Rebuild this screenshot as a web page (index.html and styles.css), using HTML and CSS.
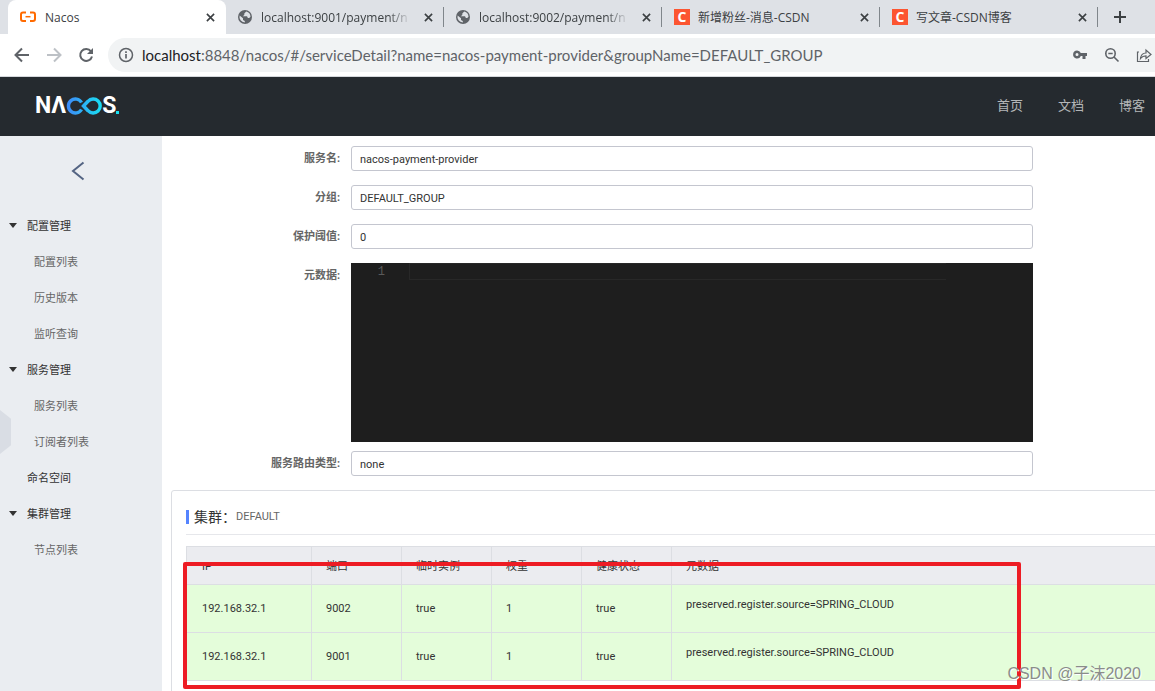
FILE: index.html
```html
<!DOCTYPE html>
<html lang="zh-CN">
<head>
<meta charset="utf-8">
<title>Nacos</title>
<link rel="stylesheet" href="styles.css">
</head>
<body>
<svg class="defs" aria-hidden="true">
  <symbol id="i-close" viewBox="0 0 10 10"><path d="M1 1l8 8M9 1L1 9" fill="none" stroke="#3c4043" stroke-width="1.8"/></symbol>
  <symbol id="i-globe" viewBox="0 0 14 14"><circle cx="7" cy="7" r="7" fill="#5f6368"/><path d="M1.6 5.6L5 8.300v1.800l1.800 1v1.400A5.600 5.600 0 0 1 1.600 5.600zM8.200 1.500L6.300 3.600v1.300L4.800 6.200h4.200l.900 1.700h1.300l1.300-1.200A5.600 5.600 0 0 0 8.200 1.500z" fill="#dee1e6"/></symbol>
</svg>

<div class="browser">
  <div class="tabs">
    <div class="tab tab-active">
      <svg class="favicon" viewBox="0 0 16 16"><path d="M6 3.500H3Q1 3.500 1 5.500v4.500Q1 12 3 12h3M10 3.500h3q2 0 2 2v4.500q0 2-2 2h-3" fill="none" stroke="#ff6a00" stroke-width="2"/><path d="M5.500 7.700h5" stroke="#ff6a00" stroke-width="1.500"/></svg>
      <span class="tab-title">Nacos</span>
      <button class="tab-close" aria-label="关闭"><svg><use href="#i-close"/></svg></button>
    </div>
    <div class="tab">
      <svg class="favicon favicon-globe"><use href="#i-globe"/></svg>
      <span class="tab-title tab-fade">localhost:9001/payment/n</span>
      <button class="tab-close" aria-label="关闭"><svg><use href="#i-close"/></svg></button>
    </div>
    <div class="tab">
      <svg class="favicon favicon-globe"><use href="#i-globe"/></svg>
      <span class="tab-title tab-fade">localhost:9002/payment/n</span>
      <button class="tab-close" aria-label="关闭"><svg><use href="#i-close"/></svg></button>
    </div>
    <div class="tab">
      <span class="favicon favicon-csdn">C</span>
      <span class="tab-title">新增粉丝-消息-CSDN</span>
      <button class="tab-close" aria-label="关闭"><svg><use href="#i-close"/></svg></button>
    </div>
    <div class="tab">
      <span class="favicon favicon-csdn">C</span>
      <span class="tab-title">写文章-CSDN博客</span>
      <button class="tab-close" aria-label="关闭"><svg><use href="#i-close"/></svg></button>
    </div>
    <button class="tab-new" aria-label="新标签页"><svg viewBox="0 0 12 12"><path d="M6 0v12M0 6h12" stroke="#3c4043" stroke-width="2"/></svg></button>
  </div>

  <div class="toolbar">
    <button class="tool" aria-label="后退"><svg viewBox="0 0 16 16"><path d="M15 8H2M8 1.500L1.500 8 8 14.500" fill="none" stroke="#5f6368" stroke-width="2"/></svg></button>
    <button class="tool" aria-label="前进"><svg viewBox="0 0 16 16"><path d="M1 8h13M8 1.500L14.500 8 8 14.500" fill="none" stroke="#bdc1c6" stroke-width="2"/></svg></button>
    <button class="tool" aria-label="刷新"><svg viewBox="0 0 16 16"><path d="M13 4.300A6 6 0 1 0 14 9.500" fill="none" stroke="#5f6368" stroke-width="2"/><path d="M15 1v6H9z" fill="#5f6368"/></svg></button>
    <div class="omnibox">
      <svg class="info" viewBox="0 0 16 16"><circle cx="8" cy="8" r="6.500" fill="none" stroke="#5f6368" stroke-width="1.500"/><path d="M8 7v4.500M8 4.300v1.700" stroke="#5f6368" stroke-width="1.700"/></svg>
      <span class="url"><b>localhost</b>:8848/nacos/#/serviceDetail?name=nacos-payment-provider&amp;groupName=DEFAULT_GROUP</span>
      <button class="tool" aria-label="密码"><svg viewBox="0 0 16 16"><path fill-rule="evenodd" d="M5 3.500a4 4 0 0 1 3.800 2.500H15v3h-1.500v3h-3V9H8.800A4 4 0 1 1 5 3.500zM5 6a1.500 1.500 0 1 0 0 3 1.500 1.500 0 0 0 0-3z" fill="#5f6368"/></svg></button>
      <button class="tool" aria-label="缩放"><svg viewBox="0 0 16 16"><circle cx="6.500" cy="6.500" r="4.700" fill="none" stroke="#5f6368" stroke-width="1.600"/><path d="M4.300 6.500h4.400M10 10l4.500 4.500" stroke="#5f6368" stroke-width="1.600"/></svg></button>
      <button class="tool" aria-label="分享"><svg viewBox="0 0 16 16"><path d="M3 5H1.500v9.500h11V12M4.500 11.500c.5-4 2.500-5.500 5.500-5.500V3l5 4.500-5 4V8.800c-2.500 0-4 .7-5.500 2.700z" fill="none" stroke="#5f6368" stroke-width="1.200"/></svg></button>
    </div>
  </div>
</div>

<header class="header">
  <a class="logo" href="#" aria-label="Nacos">
    <span>N</span><span>Λ</span>
    <svg viewBox="0 0 36 18">
      <defs><linearGradient id="loop" gradientUnits="userSpaceOnUse" x1="0" y1="0" x2="36" y2="0"><stop offset="0" stop-color="#3f87f8"/><stop offset="1" stop-color="#18e0f2"/></linearGradient></defs>
      <path d="M15.500 5.500A7 7 0 1 0 15.500 12.500" fill="none" stroke="url(#loop)" stroke-width="3.400"/>
      <path d="M17.500 9L22 4.300A7 7 0 1 1 22 13.700Z" fill="none" stroke="url(#loop)" stroke-width="3.400"/>
    </svg>
    <span>S</span><i></i>
  </a>
  <nav class="nav"><a href="#">首页</a><a href="#">文档</a><a href="#">博客</a></nav>
</header>

<div class="page">
  <aside class="sidebar">
    <button class="back" aria-label="返回"><svg viewBox="0 0 14 20"><path d="M12.500 1.500L2 10l10.500 8.500" fill="none" stroke="#546483" stroke-width="2"/></svg></button>
    <ul class="menu">
      <li class="group open"><a href="#">配置管理</a></li>
      <li><a href="#">配置列表</a></li>
      <li><a href="#">历史版本</a></li>
      <li><a href="#">监听查询</a></li>
      <li class="group open"><a href="#">服务管理</a></li>
      <li><a href="#">服务列表</a></li>
      <li><a href="#">订阅者列表</a></li>
      <li class="group"><a href="#">命名空间</a></li>
      <li class="group open"><a href="#">集群管理</a></li>
      <li><a href="#">节点列表</a></li>
    </ul>
    <button class="handle" aria-label="收起"></button>
  </aside>

  <main class="content">
    <form class="form">
      <div class="field"><label for="name">服务名:</label><input id="name" value="nacos-payment-provider" readonly></div>
      <div class="field"><label for="group">分组:</label><input id="group" value="DEFAULT_GROUP" readonly></div>
      <div class="field"><label for="threshold">保护阈值:</label><input id="threshold" value="0" readonly></div>
      <div class="field field-editor"><label for="meta">元数据:</label>
        <div class="editor"><span class="line-no">1</span><textarea id="meta" rows="1" readonly></textarea></div>
      </div>
      <div class="field"><label for="type">服务路由类型:</label><input id="type" value="none" readonly></div>
    </form>

    <section class="cluster">
      <h2 class="cluster-head">集群：<span>DEFAULT</span></h2>
      <table class="table">
        <colgroup><col class="c-ip"><col class="c-std"><col class="c-std"><col class="c-std"><col class="c-std"><col></colgroup>
        <thead><tr><th>IP</th><th>端口</th><th>临时实例</th><th>权重</th><th>健康状态</th><th>元数据</th></tr></thead>
        <tbody>
          <tr><td>192.168.32.1</td><td>9002</td><td>true</td><td>1</td><td>true</td><td class="meta">preserved.register.source=SPRING_CLOUD</td></tr>
          <tr><td>192.168.32.1</td><td>9001</td><td>true</td><td>1</td><td>true</td><td class="meta">preserved.register.source=SPRING_CLOUD</td></tr>
        </tbody>
      </table>
      <div class="marker"></div>
    </section>
  </main>
</div>
<div class="watermark">CSDN @子沫2020</div>
</body>
</html>
```
FILE: styles.css
```css
* { box-sizing: border-box; }
body {
  margin: 0;
  height: 100vh;
  overflow: hidden;
  display: flex;
  flex-direction: column;
  background: #fff;
  color: #333;
  font: 11px/16px Roboto, "Noto Sans CJK SC", sans-serif;
}
button { border: 0; padding: 0; background: none; display: flex; align-items: center; justify-content: center; }
a { color: inherit; text-decoration: none; }
.defs { display: none; }

/* browser frame */
.browser { flex: none; border-bottom: 1px solid #d5d8dc; font-family: "Open Sans", "Noto Sans CJK SC", sans-serif; }
.tabs { display: flex; height: 34px; padding-left: 8px; background: #dee1e6; overflow: hidden; }
.tab { flex: 0 0 218px; min-width: 0; display: flex; align-items: center; padding: 0 11px 0 12px; position: relative; color: #3c4043; font-size: 12px; }
.tab:not(.tab-active)::after { content: ""; position: absolute; right: 0; top: 7px; height: 20px; width: 1px; background: #80868b; }
.tab-active { background: #fff; border-radius: 8px 8px 0 0; }
.favicon { flex: none; width: 16px; height: 16px; margin-right: 9px; }
.favicon-globe { width: 14px; height: 14px; }
.favicon-csdn { background: #fc5531; color: #fff; font: bold 14px/16px "Open Sans", sans-serif; text-align: center; margin-right: 8px; }
.tab-title { flex: 1; overflow: hidden; white-space: nowrap; line-height: 20px; padding-top: 1px; }
.tab-fade { -webkit-mask-image: linear-gradient(90deg, #000 85%, transparent); mask-image: linear-gradient(90deg, #000 85%, transparent); }
.tab-close { flex: none; width: 10px; margin-left: 12px; }
.tab-close svg { width: 9px; height: 9px; }
.tab-new { width: 44px; }
.tab-new svg { width: 12px; height: 12px; }
.toolbar { display: flex; align-items: center; height: 42px; padding-left: 6px; }
.tool { flex: none; width: 32px; height: 32px; }
.tool svg { width: 16px; height: 16px; }
.omnibox { flex: 1; min-width: 0; height: 34px; margin-left: 6px; padding-left: 10px; display: flex; align-items: center; background: #f1f3f4; border-radius: 17px 0 0 17px; overflow: hidden; margin-right: -5px; }
.info { flex: none; width: 16px; height: 16px; margin-right: 8px; }
.url { flex: 1; min-width: 0; overflow: hidden; white-space: nowrap; color: #5f6368; font: 15px/22px Lato, sans-serif; }
.url b { font-weight: 400; color: #202124; }

/* site header */
.header { flex: none; display: flex; align-items: center; justify-content: space-between; height: 59px; padding: 0 10px 1px 35px; background: #252a2f; }
.logo { display: flex; align-items: center; height: 24px; color: #fff; font: 700 23px/24px Roboto, sans-serif; }
.logo svg { width: 36px; height: 18px; }
.logo i { align-self: flex-end; width: 3px; height: 3px; margin-bottom: 4px; background: #18e0f2; }
.nav { display: flex; gap: 35px; color: #b4b6b8; font-size: 13px; line-height: 20px; }

.page { flex: 1; min-height: 0; display: flex; }

/* sidebar */
.sidebar { flex: 0 0 162px; position: relative; background: #eaedf1; }
.back { width: 100%; height: 71px; padding: 0 6px 2px 0; }
.back svg { width: 14px; height: 20px; }
.menu { list-style: none; margin: 0; padding: 0; }
.menu li { display: flex; align-items: center; height: 36px; padding-left: 34px; color: #666; }
.menu .group { padding-left: 27px; color: #333; }
.menu .open { padding-left: 9px; }
.menu .open::before { content: ""; border: 4px solid transparent; border-top: 5px solid #333; border-bottom: 0; margin-right: 10px; }
.menu a { padding-top: 4px; }
.handle { position: absolute; left: 0; top: 274px; width: 11px; height: 44px; background: #d9dde4; clip-path: polygon(0 0, 100% 20%, 100% 80%, 0 100%); }

/* service form */
.content { flex: 1; min-width: 0; overflow: hidden; padding: 10px 0 0 9px; }
.form { padding-right: 122px; }
.field { display: grid; grid-template-columns: 169px minmax(0, 1fr); column-gap: 11px; margin-bottom: 14px; }
.field label { padding-top: 1px; text-align: right; line-height: 24px; font-weight: 700; color: #666; }
.field input { width: 100%; height: 25px; border: 1px solid #c4c6cf; border-radius: 3px; padding: 2px 8px 0; font: inherit; color: #333; background: #fff; }
.field-editor { margin-bottom: 9px; }
.editor { display: flex; align-items: flex-start; height: 179px; background: #1e1e1e; }
.line-no { width: 58px; padding-right: 24px; text-align: right; color: #5a5a5a; font: 12px/18px "Liberation Mono", monospace; }
.editor textarea { flex: 0 1 537px; min-width: 0; height: 17px; padding: 0; border: 1px solid #282828; border-right: 0; background: none; resize: none; color: #ddd; overflow: hidden; }

/* cluster card */
.cluster { position: relative; height: 240px; margin-right: -20px; padding: 0 14px; border: 1px solid #dcdee3; border-radius: 3px; }
.cluster-head { display: flex; align-items: center; margin: 0 0 11px; height: 44px; padding-top: 8px; border-bottom: 1px solid #e6e7eb; font-size: 14px; font-weight: 400; }
.cluster-head::before { content: ""; width: 3px; height: 14px; margin-right: 5px; background: #5584ff; }
.cluster-head span { color: #666; font-size: 11px; }
.table { width: 100%; table-layout: fixed; border-collapse: collapse; }
.c-ip { width: 125px; }
.c-std { width: 90px; }
.table th, .table td { border: 1px solid #dcdee3; padding: 0 15px; text-align: left; font-weight: 400; white-space: nowrap; }
.table th { height: 38px; padding-top: 2px; background: #ebecf0; }
.table td { height: 48px; background: #e4fdda; }
.table .meta { padding-bottom: 8px; }
.table th:nth-child(n+2), .table td:nth-child(n+2) { padding-left: 14px; }
.marker { position: absolute; left: 11px; top: 71px; width: 838px; height: 127px; border: 4px solid #ed1c24; border-radius: 2px; }

.watermark { position: absolute; right: 14px; bottom: 6px; color: #8a8d8a; font: 16px/22px "Liberation Sans", "Noto Sans CJK SC", sans-serif; text-shadow: 1px 1px 0 #fff; }
```
